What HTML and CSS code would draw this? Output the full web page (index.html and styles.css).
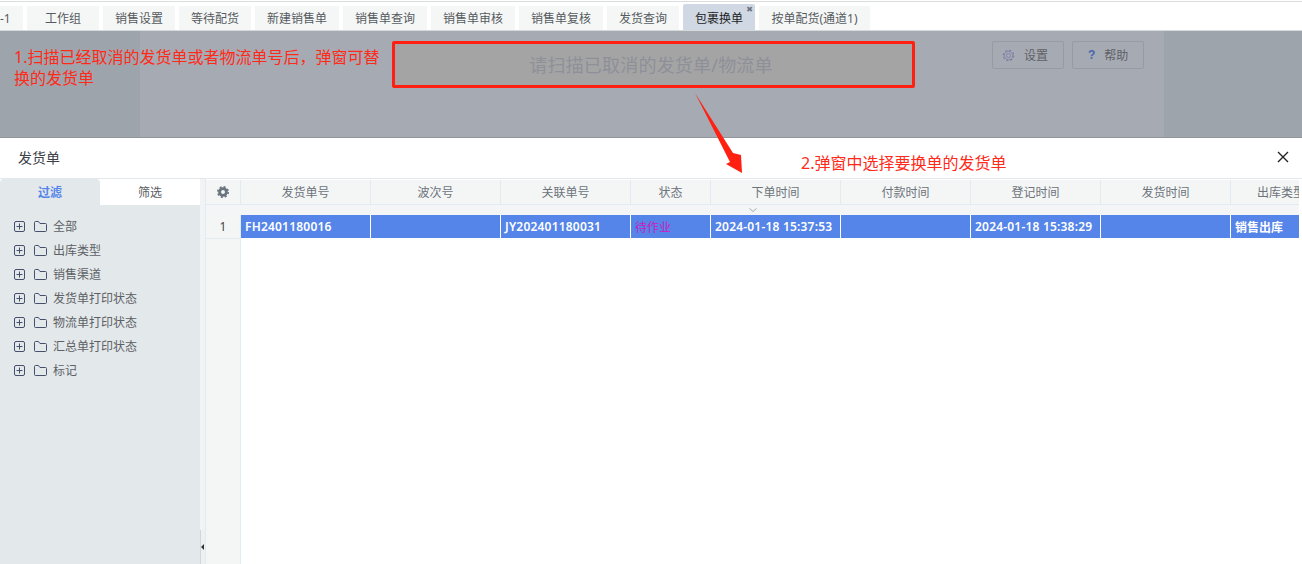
FILE: index.html
```html
<!DOCTYPE html>
<html lang="zh">
<head>
<meta charset="utf-8">
<title>包裹换单</title>
<link rel="stylesheet" href="styles.css">
</head>
<body>
<nav class="tabs">
  <span class="tab tab-cut">-1</span>
  <span class="tab w72">工作组</span>
  <span class="tab w72">销售设置</span>
  <span class="tab w72">等待配货</span>
  <span class="tab w84">新建销售单</span>
  <span class="tab w84">销售单查询</span>
  <span class="tab w84">销售单审核</span>
  <span class="tab w84">销售单复核</span>
  <span class="tab w72">发货查询</span>
  <span class="tab w72 active">包裹换单<i class="tab-x">✖</i></span>
  <span class="tab w111">按单配货(通道1)</span>
</nav>

<header class="scan">
  <div class="side side-l"></div>
  <div class="scan-main">
    <input class="scan-input" placeholder="请扫描已取消的发货单/物流单">
    <div class="scan-btns">
      <button class="btn">
        <svg class="btn-ico" viewBox="0 0 14 14"><circle cx="7" cy="7" r="2.2" fill="none" stroke="#7d82a6" stroke-width="1"/><circle cx="7" cy="7" r="4.6" fill="none" stroke="#7d82a6" stroke-width="1"/><circle cx="7" cy="7" r="5.6" fill="none" stroke="#7d82a6" stroke-width="1.2" stroke-dasharray="2.2 2.2"/></svg>
        <span>设置</span>
      </button>
      <button class="btn btn-help"><b class="q">?</b><span>帮助</span></button>
    </div>
  </div>
  <div class="side side-r"></div>
</header>

<section class="modal">
  <div class="modal-head">
    <h2 class="modal-title">发货单</h2>
    <svg class="close" viewBox="0 0 12 12"><path d="M1 1 11 11M11 1 1 11" stroke="#222" stroke-width="1.4" fill="none"/></svg>
  </div>
  <div class="modal-body">
    <aside class="filter">
      <div class="filter-tabs">
        <span class="ft ft-on">过滤</span>
        <span class="ft">筛选</span>
      </div>
      <ul class="tree">
        <li class="node"><svg class="plus" viewBox="0 0 11 11"><rect x=".5" y=".5" width="10" height="10" rx="1.5"/><path d="M2.5 5.5h6M5.5 2.5v6"/></svg><svg class="folder" viewBox="0 0 13 11"><path d="M.5 1.5a1 1 0 0 1 1-1h3l1.5 2h5.500a1 1 0 0 1 1 1v6a1 1 0 0 1-1 1h-10a1 1 0 0 1-1-1z"/></svg>全部</li>
        <li class="node"><svg class="plus" viewBox="0 0 11 11"><rect x=".5" y=".5" width="10" height="10" rx="1.5"/><path d="M2.5 5.5h6M5.5 2.5v6"/></svg><svg class="folder" viewBox="0 0 13 11"><path d="M.5 1.5a1 1 0 0 1 1-1h3l1.5 2h5.500a1 1 0 0 1 1 1v6a1 1 0 0 1-1 1h-10a1 1 0 0 1-1-1z"/></svg>出库类型</li>
        <li class="node"><svg class="plus" viewBox="0 0 11 11"><rect x=".5" y=".5" width="10" height="10" rx="1.5"/><path d="M2.5 5.5h6M5.5 2.5v6"/></svg><svg class="folder" viewBox="0 0 13 11"><path d="M.5 1.5a1 1 0 0 1 1-1h3l1.5 2h5.500a1 1 0 0 1 1 1v6a1 1 0 0 1-1 1h-10a1 1 0 0 1-1-1z"/></svg>销售渠道</li>
        <li class="node"><svg class="plus" viewBox="0 0 11 11"><rect x=".5" y=".5" width="10" height="10" rx="1.5"/><path d="M2.5 5.5h6M5.5 2.5v6"/></svg><svg class="folder" viewBox="0 0 13 11"><path d="M.5 1.5a1 1 0 0 1 1-1h3l1.5 2h5.500a1 1 0 0 1 1 1v6a1 1 0 0 1-1 1h-10a1 1 0 0 1-1-1z"/></svg>发货单打印状态</li>
        <li class="node"><svg class="plus" viewBox="0 0 11 11"><rect x=".5" y=".5" width="10" height="10" rx="1.5"/><path d="M2.5 5.5h6M5.5 2.5v6"/></svg><svg class="folder" viewBox="0 0 13 11"><path d="M.5 1.5a1 1 0 0 1 1-1h3l1.5 2h5.500a1 1 0 0 1 1 1v6a1 1 0 0 1-1 1h-10a1 1 0 0 1-1-1z"/></svg>物流单打印状态</li>
        <li class="node"><svg class="plus" viewBox="0 0 11 11"><rect x=".5" y=".5" width="10" height="10" rx="1.5"/><path d="M2.5 5.5h6M5.5 2.5v6"/></svg><svg class="folder" viewBox="0 0 13 11"><path d="M.5 1.5a1 1 0 0 1 1-1h3l1.5 2h5.500a1 1 0 0 1 1 1v6a1 1 0 0 1-1 1h-10a1 1 0 0 1-1-1z"/></svg>汇总单打印状态</li>
        <li class="node"><svg class="plus" viewBox="0 0 11 11"><rect x=".5" y=".5" width="10" height="10" rx="1.5"/><path d="M2.5 5.5h6M5.5 2.5v6"/></svg><svg class="folder" viewBox="0 0 13 11"><path d="M.5 1.5a1 1 0 0 1 1-1h3l1.5 2h5.500a1 1 0 0 1 1 1v6a1 1 0 0 1-1 1h-10a1 1 0 0 1-1-1z"/></svg>标记</li>
      </ul>
    </aside>
    <div class="split"><span class="split-handle"></span></div>
    <div class="table">
      <div class="th th-gear"><svg class="gear" viewBox="0 0 12 12"><circle cx="6" cy="6" r="3.400" fill="none" stroke="#69747f" stroke-width="2.800"/><circle cx="6" cy="6" r="5.200" fill="none" stroke="#69747f" stroke-width="1.600" stroke-dasharray="2.040 2.040"/></svg></div>
      <div class="th">发货单号</div>
      <div class="th">波次号</div>
      <div class="th">关联单号</div>
      <div class="th">状态</div>
      <div class="th">下单时间</div>
      <div class="th">付款时间</div>
      <div class="th">登记时间</div>
      <div class="th">发货时间</div>
      <div class="th th-clip">出库类型</div>
      <div class="gap"><svg class="chev" viewBox="0 0 8 4"><path d="M.5.500 4 3.500 7.500.500" fill="none" stroke="#98a2ac" stroke-width=".9"/></svg></div>
      <div class="num">1</div>
      <div class="td">FH2401180016</div>
      <div class="td"></div>
      <div class="td">JY202401180031</div>
      <div class="td td-status">待作业</div>
      <div class="td">2024-01-18 15:37:53</div>
      <div class="td"></div>
      <div class="td">2024-01-18 15:38:29</div>
      <div class="td"></div>
      <div class="td td-last">销售出库</div>
      <div class="num-fill"></div>
    </div>
  </div>
</section>

<p class="note note-1">1.扫描已经取消的发货单或者物流单号后&#xFF0C;弹窗可替换的发货单</p>
<p class="note note-2">2.弹窗中选择要换单的发货单</p>
<svg class="arrow" viewBox="0 0 50 82"><polygon points="0,0 38,60 46,62 47,80 31,71 35,69"/></svg>
</body>
</html>
```
FILE: styles.css
```css
* { box-sizing: border-box; }
html, body { margin: 0; height: 100%; }
body {
  position: relative;
  width: 1302px;
  height: 564px;
  overflow: hidden;
  display: flex;
  flex-direction: column;
  background: #fff;
  font-family: "Noto Sans", "Noto Sans CJK SC", sans-serif;
  font-size: 12px;
  color: #555;
}

/* tab strip */
.tabs {
  flex: 0 0 31px;
  display: flex;
  align-items: flex-end;
  gap: 4px;
  background: linear-gradient(#fff 1px, #d9dddd 1px, #d9dddd 2px, #fff 2px);
  border-bottom: 1px solid #d5dadb;
}
.tab {
  position: relative;
  height: 24px;
  display: flex;
  align-items: center;
  justify-content: center;
  background: #f5f7f7;
  color: #575b60;
  white-space: nowrap;
}
.tab-cut { width: 23px; justify-content: flex-start; }
.w72 { width: 72px; }
.w84 { width: 84px; }
.w111 { width: 111px; }
.active {
  height: 26px;
  padding-top: 2px;
  background: #cfd8e3;
  color: #222;
  border-radius: 2px 2px 0 0;
}
.tab-x {
  position: absolute;
  top: 2px;
  right: 2px;
  font-size: 8px;
  line-height: 8px;
  font-style: normal;
  color: #6e7480;
  font-family: "DejaVu Sans", sans-serif;
}

/* dimmed scan header */
.scan {
  flex: 0 0 107px;
  display: flex;
  background: #a6aab3;
  border-bottom: 1px solid #92959c;
}
.side { background: #9ea4ab; }
.side-l { width: 140px; }
.side-r { width: 138px; }
.scan-main {
  flex: 1;
  display: flex;
  align-items: flex-start;
  padding: 10px 20px 0 252px;
}
.scan-input {
  width: 523px;
  height: 47px;
  border: 3px solid #ff2011;
  border-radius: 2px;
  background: #a5a4a4;
  font: 18px "Noto Sans", "Noto Sans CJK SC", sans-serif;
  letter-spacing: .2px;
  text-align: center;
  padding: 0 5px 0 0;
  outline: 0;
}
.scan-input::placeholder { color: #8d9099; opacity: 1; }
.scan-btns { display: flex; gap: 8px; margin-left: 77px; }
.btn {
  width: 72px;
  height: 28px;
  display: flex;
  align-items: center;
  gap: 9px;
  padding: 0 0 0 9px;
  border: 1px solid #979ba6;
  border-radius: 2px;
  background: #a6aab3;
  font: 12px "Noto Sans", "Noto Sans CJK SC", sans-serif;
  color: #5f6166;
}
.btn-help { padding-left: 15px; gap: 9px; }
.btn-ico { width: 13px; height: 13px; }
.q {
  color: #4566ad;
  font: bold 12px "Liberation Sans", sans-serif;
}

/* modal */
.modal {
  flex: 1;
  min-height: 0;
  display: flex;
  flex-direction: column;
  background: #fff;
}
.modal-head {
  flex: 0 0 41px;
  display: flex;
  align-items: center;
  justify-content: space-between;
  padding: 0 13px 0 18px;
  border-bottom: 1px solid #e3e8ec;
}
.modal-title {
  margin: 0 0 3px;
  font-size: 14px;
  font-weight: 400;
  color: #3c4148;
}
.close { width: 12px; height: 12px; margin-bottom: 3px; }
.modal-body { flex: 1; min-height: 0; display: flex; }

/* filter tree */
.filter {
  width: 200px;
  display: flex;
  flex-direction: column;
  background: #e3e8eb;
}
.filter-tabs { flex: 0 0 26px; display: flex; background: #fff; }
.ft {
  width: 100px;
  display: flex;
  align-items: center;
  justify-content: center;
  color: #5a5e63;
}
.ft-on {
  background: #e3e8eb;
  border-radius: 4px 4px 0 0;
  color: #5585e8;
  font-weight: 700;
}
.tree { list-style: none; margin: 0; padding: 9px 0 0 14px; }
.node {
  height: 24px;
  display: flex;
  align-items: center;
  color: #5d6165;
}
.plus { width: 11px; height: 11px; margin-right: 9px; }
.plus rect, .plus path { fill: none; stroke: #46506a; stroke-width: 1; }
.folder { width: 13px; height: 11px; margin-right: 6px; }
.folder path { fill: none; stroke: #46506a; stroke-width: 1; }

/* splitter */
.split {
  position: relative;
  width: 6px;
  background: #f1f3f5;
  border-right: 1px solid #e3ebf2;
}
.split-handle {
  position: absolute;
  left: 0;
  top: 351px;
  width: 5px;
  height: 34px;
  background: #eef0f1;
  border-left: 1px solid #d3d6d9;
}
.split-handle::after {
  content: "";
  position: absolute;
  left: 0;
  top: 14px;
  border: 3px solid transparent;
  border-left-width: 0;
  border-right-color: #333;
}

/* grid */
.table {
  flex: 1;
  min-width: 0;
  overflow: hidden;
  display: grid;
  grid-template-columns: 35px 130px 130px 130px 80px 130px 130px 130px 130px 68px;
  grid-template-rows: 25px 10px 24px 1fr;
  padding-top: 1px;
}
.th {
  display: flex;
  align-items: center;
  justify-content: center;
  background: #f4f6f6;
  border-right: 1px solid #e3ebf2;
  border-bottom: 1px solid #e3ebf2;
  color: #6d737a;
  white-space: nowrap;
  overflow: hidden;
}
.th-gear { color: #69747f; }
.th-clip {
  justify-content: flex-start;
  padding-left: 26px;
  border-right: 0;
}
.gear { width: 12px; height: 12px; }
.gap {
  grid-column: 1 / -1;
  position: relative;
  background: #f3f5f6;
}
.chev {
  position: absolute;
  left: 543px;
  top: 3px;
  width: 8px;
  height: 4px;
}
.num {
  display: flex;
  align-items: center;
  justify-content: center;
  background: #f4f6f6;
  border-right: 1px solid #e3ebf2;
  border-bottom: 1px solid #e3ebf2;
  color: #444;
}
.td {
  display: flex;
  align-items: center;
  padding: 0 4px;
  background: #5585e8;
  border-right: 1px solid #fff;
  border-bottom: 1px solid #fff;
  color: #fff;
  font-weight: 600;
  letter-spacing: .2px;
  white-space: nowrap;
  overflow: hidden;
}
.td-status { color: #c820c0; font-weight: 400; letter-spacing: 0; }
.td-last { border-right: 0; letter-spacing: 0; }
.num-fill {
  grid-column: 1;
  background: #f4f6f6;
  border-right: 1px solid #e3ebf2;
}

/* annotations over the page */
.note {
  position: absolute;
  margin: 0;
  color: #ff2a1a;
  font-size: 16px;
}
.note-1 { left: 14px; top: 47px; width: 368px; line-height: 21px; }
.note-2 { left: 801px; top: 152px; line-height: 22px; white-space: nowrap; }
.arrow {
  position: absolute;
  left: 695px;
  top: 93px;
  width: 50px;
  height: 82px;
}
.arrow polygon { fill: #ff2011; }
```
